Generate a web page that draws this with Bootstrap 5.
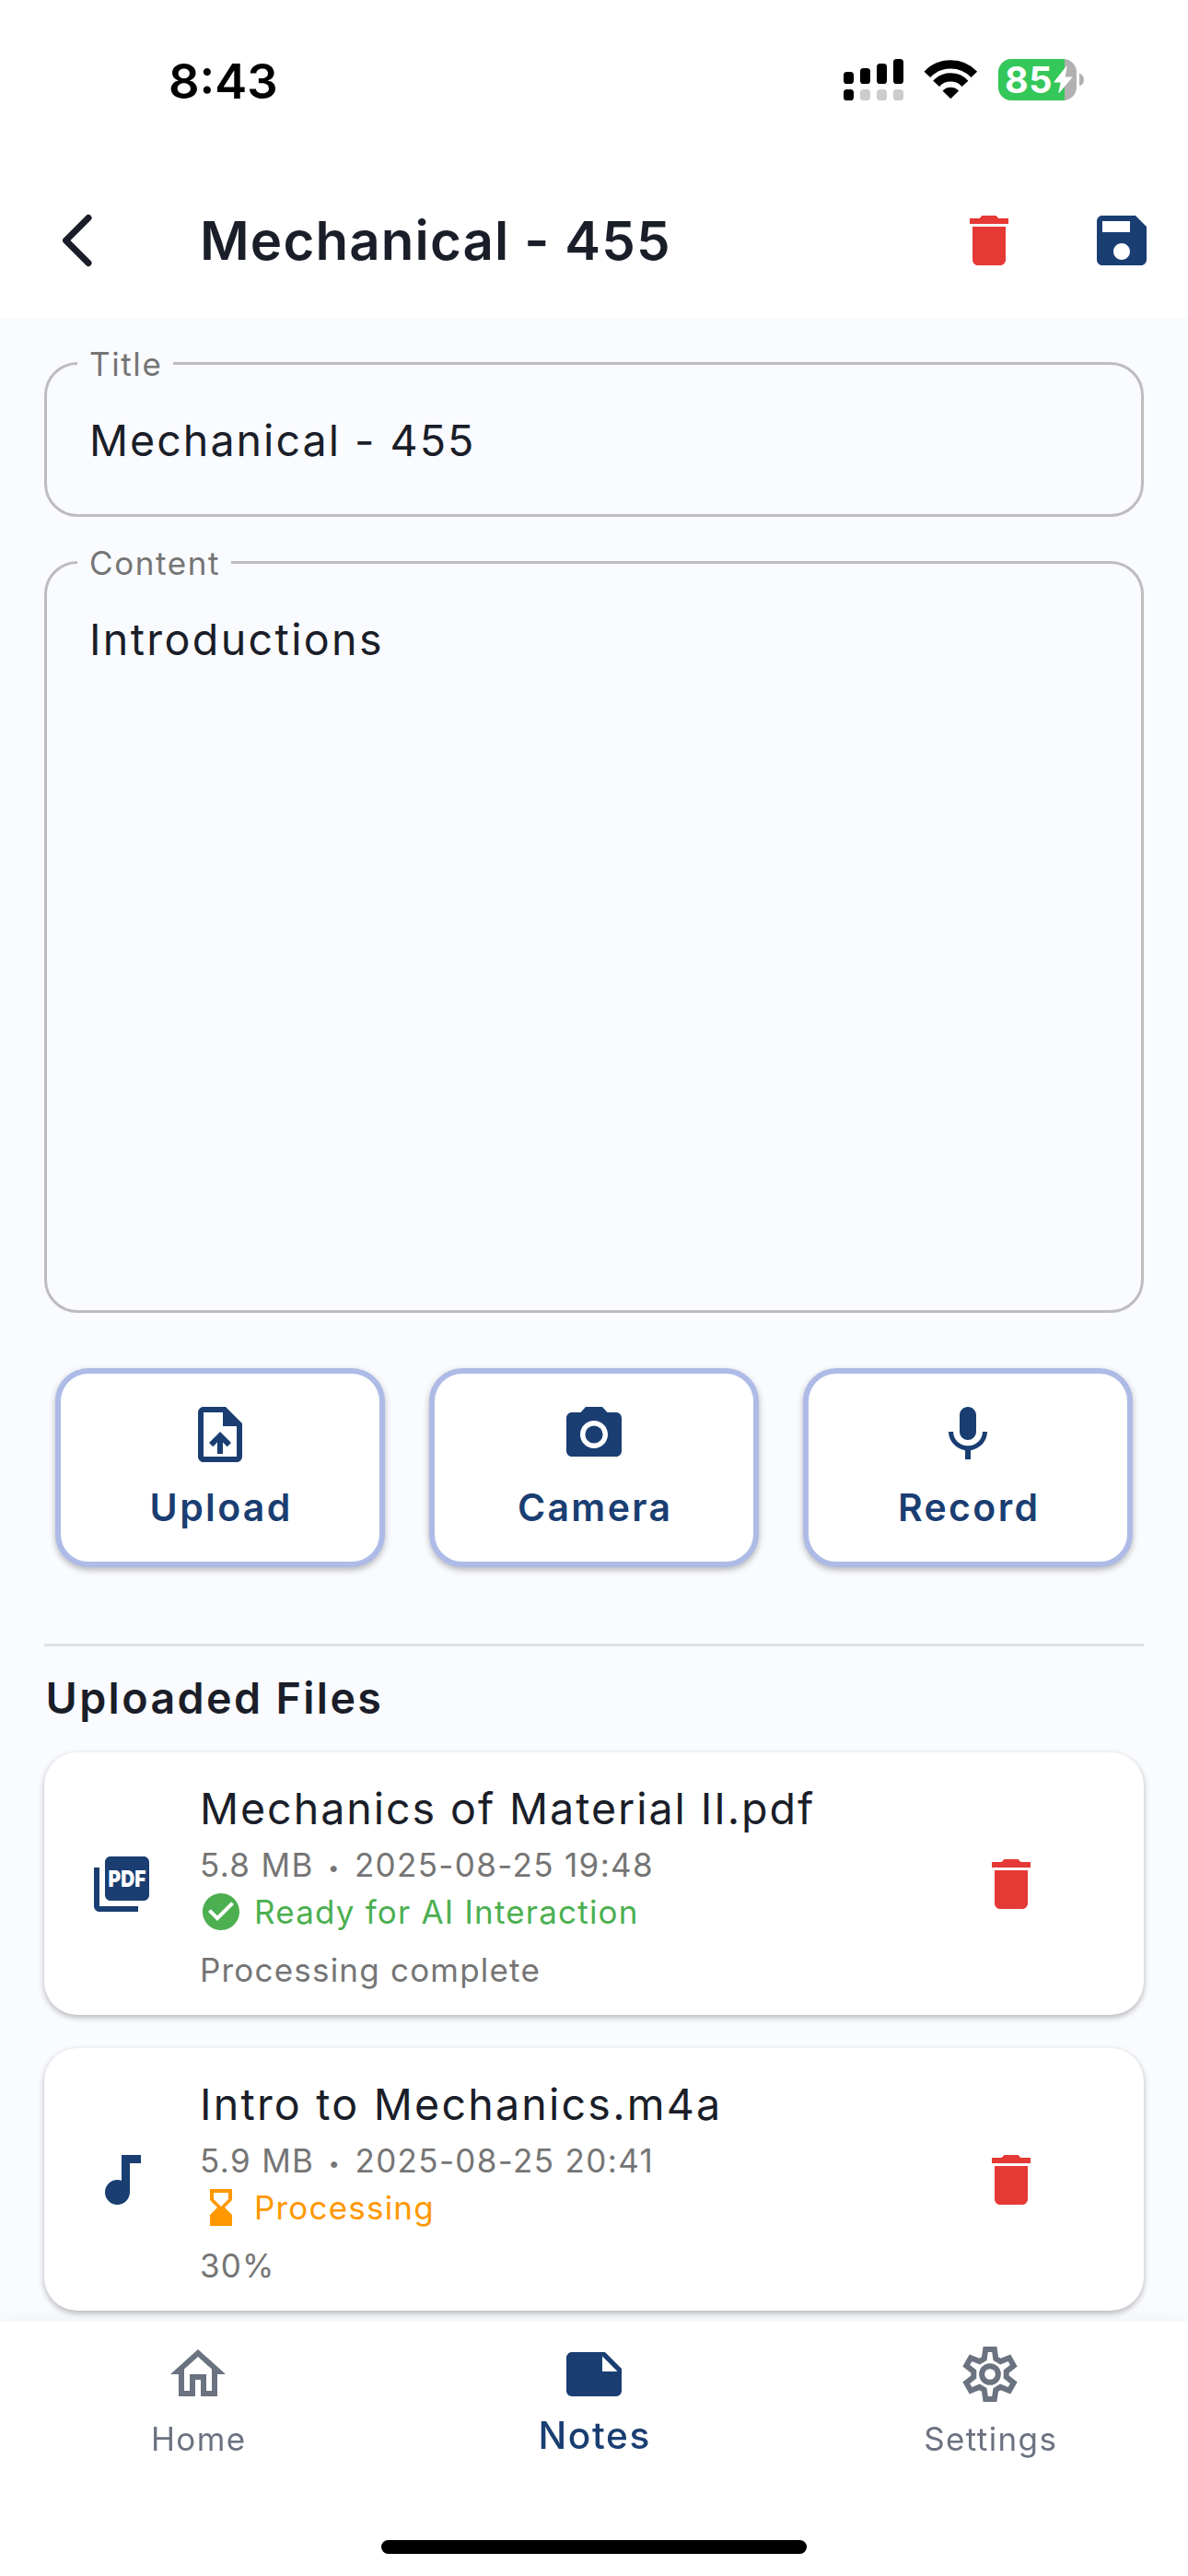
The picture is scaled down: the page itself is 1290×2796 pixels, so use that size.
<!DOCTYPE html>
<html lang="en">
<head>
<meta charset="utf-8">
<meta name="viewport" content="width=device-width, initial-scale=1">
<title>Mechanical - 455</title>
<link href="https://cdn.jsdelivr.net/npm/bootstrap@5.3.0/dist/css/bootstrap.min.css" rel="stylesheet">
<style>
  :root { --ink: #1a1e29; --navy: #1a3e72; --page: #fafbff; --muted: #757575; --danger: #e53935; }
  body { background: var(--page); color: var(--ink); font-family: Inter, "Liberation Sans", sans-serif; }
  .screen { width: 1290px; height: 2796px; }
  svg { display: block; flex: none; overflow: visible; }
  .ico { width: 72px; height: 72px; fill: currentColor; }
  .ico-sm { width: 48px; height: 48px; fill: currentColor; }
  .navy { color: var(--navy); }
  .red { color: var(--danger); }

  .status-bar { height: 173px; padding: 0 113px 0 183px; color: #000; }
  .clock { font-size: 52.5px; font-weight: 600; line-height: 60px; padding-top: 3px; }
  .wifi { margin: 0 18px 0 19px; }
  .app-bar { height: 172px; padding: 4px 36px 0 48px; gap: 72px; }
  .app-title { font-size: 58.2px; font-weight: 600; line-height: 72px; letter-spacing: 1.15px; margin: 0 0 0 25px; }

  .content { padding: 48px 48px 0; }
  .field { height: 168px; }
  .field-tall { height: 816px; margin-top: 48px; }
  .field .form-control { height: 100%; background: transparent; border: 3px solid #bdbdbd; border-radius: 36px;
    padding: 2px 45px 0 46px; font-size: 46.6px; line-height: 72px; color: var(--ink); letter-spacing: 2px; resize: none; }
  .field-tall .form-control { padding-top: 46px; letter-spacing: 2.36px; }
  .field-label { position: absolute; left: 36px; top: -20px; padding: 0 12px 0 13px; background: var(--page);
    font-size: 35px; line-height: 44px; color: var(--muted); letter-spacing: 1.6px; }

  .actions { margin: 60px 12px 0; gap: 48px; }
  .action { height: 216px; border: 6px solid #aebbe7; border-radius: 36px; background: #fff; padding: 30px 0 0;
    box-shadow: 0 3px 7px rgba(0,0,0,.28); color: var(--navy); font-size: 41px; font-weight: 600; line-height: 48px; letter-spacing: 2.35px; }
  .action span { margin: 19px -2.3px 0 0; }
  .rule { height: 3px; background: #e0e2e3; margin-top: 82.5px; }
  .section-title { font-size: 46.6px; font-weight: 600; line-height: 60px; letter-spacing: 2.38px; margin: 26.5px 0 29px 1.5px; }

  .file { height: 285px; border: 0; border-radius: 36px; background: #fff; padding: 0 108px 0 48px; margin-bottom: 36px;
    box-shadow: 0 3px 6px rgba(0,0,0,.24), 0 1px 10px rgba(0,0,0,.05); }
  .file-body { margin-left: 49px; padding-top: 31px; }
  .file-name { font-size: 46.6px; line-height: 60px; letter-spacing: 1.93px; color: var(--ink); }
  .file-name.wide { letter-spacing: 2.2px; }
  .file-meta { font-size: 35px; line-height: 54px; letter-spacing: 1.35px; color: var(--muted); margin-top: 4px; white-space: nowrap; }
  .dot { font-size: 22px; line-height: 1; vertical-align: 2px; margin: 0 4px; }
  .file-status { font-size: 35px; line-height: 48px; letter-spacing: 1.2px; gap: 12px; }
  .file-status svg { margin-left: -1px; }
  .file-note { font-size: 35px; line-height: 54px; letter-spacing: 1.2px; color: var(--muted); margin-top: 12px; }
  .ready { color: #4caf50; }
  .busy { color: #ff9800; }

  .tab-bar { height: 276px; background: #fff; box-shadow: 0 -3px 20px rgba(0,0,0,.04); z-index: 2; }
  .tab-item { padding-top: 21px; color: #6b7280; font-size: 35px; line-height: 48px; letter-spacing: 1.4px; }
  .tab-item span { margin: 10px -1.5px 0 0; }
  .tab-item.current { color: var(--navy); font-size: 40.6px; font-weight: 500; letter-spacing: 1.64px; }
  .tab-item.current span { margin-top: 7px; }
  .home-indicator { width: 462px; height: 15px; border-radius: 8px; background: #000; margin-bottom: 24px; }
</style>
</head>
<body>
<div class="screen d-flex flex-column overflow-hidden">
  <header class="bg-white">
    <div class="status-bar d-flex align-items-center justify-content-between">
      <span class="clock">8:43</span>
      <div class="d-flex align-items-center">
        <svg width="65" height="45" viewBox="0 0 65 45">
          <rect x="0" y="14" width="11" height="13" rx="3.6"/><rect x="18" y="10" width="11" height="17" rx="3.6"/>
          <rect x="36" y="5" width="11" height="22" rx="3.6"/><rect x="54" y="0" width="11" height="27" rx="3.6"/>
          <rect x="0" y="33" width="11" height="12" rx="3.6"/>
          <g fill="#ccc"><rect x="18" y="33" width="11" height="12" rx="3.6"/><rect x="36" y="33" width="11" height="12" rx="3.6"/><rect x="54" y="33" width="11" height="12" rx="3.6"/></g>
        </svg>
        <svg class="wifi" width="66" height="45" viewBox="0 4 66 45">
          <g fill="none" stroke="#000" stroke-width="9.2"><path d="M6.8 20.8A35.2 35.2 0 0 1 57.8 20.8"/><path d="M16.6 30.8A21.2 21.2 0 0 1 48 30.8"/></g>
          <path d="M32.3 46.3L24.3 38.6A11.6 11.6 0 0 1 40.3 38.6Z" stroke="#000" stroke-width="1.2" stroke-linejoin="round"/>
        </svg>
        <svg width="93" height="45" viewBox="0 0 93 45">
          <rect width="85" height="45" rx="14.5" fill="#b1b1b1"/>
          <path d="M14.5 0H72V45H14.5A14.5 14.5 0 0 1 0 30.5V14.5A14.5 14.5 0 0 1 14.5 0Z" fill="#34c759"/>
          <path d="M88 15.5Q93 17.5 93 22.5T88 29.5Z" fill="#b1b1b1"/>
          <text x="7" y="36.6" font-size="39.5" font-weight="700" letter-spacing=".6" fill="#fff">85</text>
          <path d="M74 8.500L61 25H68.500L66 36.200L79.500 20H72Z" fill="#fff" stroke="#fff" stroke-width="1.2" stroke-linejoin="round"/>
        </svg>
      </div>
    </div>
    <div class="app-bar d-flex align-items-center">
      <svg class="ico" viewBox="0 0 72 72"><path d="M48 11.500L23.500 36L48 60.500" fill="none" stroke="#1a1e29" stroke-width="7" stroke-linecap="round" stroke-linejoin="round"/></svg>
      <h1 class="app-title flex-grow-1">Mechanical - 455</h1>
      <svg class="ico red" viewBox="0 0 24 24"><path d="M6 19c0 1.100.9 2 2 2h8c1.100 0 2-.9 2-2V7H6v12zM19 4h-3.500l-1-1h-5l-1 1H5v2h14V4z"/></svg>
      <svg class="ico navy" viewBox="0 0 24 24"><path d="M17 3H5c-1.110 0-2 .9-2 2v14c0 1.100.89 2 2 2h14c1.100 0 2-.9 2-2V7l-4-4zm-5 16c-1.660 0-3-1.340-3-3s1.340-3 3-3 3 1.340 3 3-1.340 3-3 3zm3-10H5V5h10v4z"/></svg>
    </div>
  </header>

  <main class="content flex-grow-1">
    <div class="field position-relative">
      <input id="note-title" class="form-control" value="Mechanical - 455">
      <label for="note-title" class="field-label">Title</label>
    </div>
    <div class="field field-tall position-relative">
      <textarea id="note-content" class="form-control">Introductions</textarea>
      <label for="note-content" class="field-label">Content</label>
    </div>

    <div class="actions d-flex">
      <button class="action flex-fill w-100 d-flex flex-column align-items-center">
        <svg class="ico" viewBox="0 0 24 24"><path d="M14 2H6c-1.100 0-1.990.9-1.990 2L4 20c0 1.100.89 2 1.990 2H18c1.100 0 2-.9 2-2V8l-6-6zm4 18H6V4h7v5h5v11zM8 15.010l1.410 1.410L11 14.840V19h2v-4.160l1.590 1.590L16 15.010 12.010 11z"/></svg>
        <span>Upload</span>
      </button>
      <button class="action flex-fill w-100 d-flex flex-column align-items-center">
        <svg class="ico" viewBox="0 0 24 24"><circle cx="12" cy="12" r="3.200"/><path d="M9 2L7.170 4H4c-1.100 0-2 .9-2 2v12c0 1.100.9 2 2 2h16c1.100 0 2-.9 2-2V6c0-1.100-.9-2-2-2h-3.170L15 2H9zm3 15c-2.760 0-5-2.240-5-5s2.240-5 5-5 5 2.240 5 5-2.240 5-5 5z"/></svg>
        <span>Camera</span>
      </button>
      <button class="action flex-fill w-100 d-flex flex-column align-items-center">
        <svg class="ico" viewBox="0 0 24 24"><path d="M12 14c1.660 0 2.990-1.340 2.990-3L15 5c0-1.660-1.340-3-3-3S9 3.340 9 5v6c0 1.660 1.340 3 3 3zm5.300-3c0 3-2.540 5.100-5.300 5.100S6.700 14 6.700 11H5c0 3.410 2.720 6.230 6 6.720V21h2v-3.280c3.280-.48 6-3.300 6-6.720h-1.700z"/></svg>
        <span>Record</span>
      </button>
    </div>

    <div class="rule"></div>
    <h2 class="section-title">Uploaded Files</h2>

    <article class="card file flex-row align-items-center">
      <svg class="ico navy" viewBox="0 0 24 24"><path d="M20 2H8c-1.100 0-2 .9-2 2v12c0 1.100.9 2 2 2h12c1.100 0 2-.9 2-2V4c0-1.100-.9-2-2-2zM4 6H2v14c0 1.100.9 2 2 2h14v-2H4V6z"/><text x="7.200" y="13" font-size="8.250" font-weight="900" fill="#fff" textLength="13.600" lengthAdjust="spacingAndGlyphs">PDF</text></svg>
      <div class="file-body flex-grow-1 align-self-start">
        <div class="file-name">Mechanics of Material II.pdf</div>
        <div class="file-meta">5.8 MB <span class="dot">•</span> 2025-08-25 19:48</div>
        <div class="file-status ready d-flex align-items-center">
          <svg class="ico-sm" viewBox="0 0 24 24"><path d="M12 2C6.480 2 2 6.480 2 12s4.480 10 10 10 10-4.480 10-10S17.520 2 12 2zm-2 15l-5-5 1.410-1.410L10 14.170l7.590-7.590L19 8l-9 9z"/></svg>
          <span>Ready for AI Interaction</span>
        </div>
        <div class="file-note">Processing complete</div>
      </div>
      <svg class="ico red" viewBox="0 0 24 24"><path d="M6 19c0 1.100.9 2 2 2h8c1.100 0 2-.9 2-2V7H6v12zM19 4h-3.500l-1-1h-5l-1 1H5v2h14V4z"/></svg>
    </article>

    <article class="card file flex-row align-items-center">
      <svg class="ico navy" viewBox="0 0 24 24"><path d="M12 3v9.280c-.47-.17-.97-.28-1.500-.28C8.010 12 6 14.010 6 16.500S8.010 21 10.500 21c2.310 0 4.200-1.750 4.450-4H15V6h4V3h-7z"/></svg>
      <div class="file-body flex-grow-1 align-self-start">
        <div class="file-name wide">Intro to Mechanics.m4a</div>
        <div class="file-meta">5.9 MB <span class="dot">•</span> 2025-08-25 20:41</div>
        <div class="file-status busy d-flex align-items-center">
          <svg class="ico-sm" viewBox="0 0 24 24"><path d="M18 22l-.01-6L14 12l3.990-4.010L18 2H6v6l4 4-4 3.990V22h12zM8 7.500V4h8v3.500l-4 4-4-4z"/></svg>
          <span>Processing</span>
        </div>
        <div class="file-note">30%</div>
      </div>
      <svg class="ico red" viewBox="0 0 24 24"><path d="M6 19c0 1.100.9 2 2 2h8c1.100 0 2-.9 2-2V7H6v12zM19 4h-3.500l-1-1h-5l-1 1H5v2h14V4z"/></svg>
    </article>
  </main>

  <nav class="tab-bar fixed-bottom d-flex flex-column align-items-center justify-content-between">
    <div class="d-flex w-100">
      <div class="tab-item col-4 d-flex flex-column align-items-center">
        <svg class="ico" viewBox="0 0 24 24"><path d="M12 5.690l5 4.500V18h-2v-6H9v6H7v-7.810l5-4.500M12 3L2 12h3v8h6v-6h2v6h6v-8h3L12 3z"/></svg>
        <span>Home</span>
      </div>
      <div class="tab-item current col-4 d-flex flex-column align-items-center">
        <svg class="ico" viewBox="0 0 24 24"><path d="M22 10l-6-6H4c-1.100 0-2 .9-2 2v12.010c0 1.100.9 1.990 2 1.990l16-.01c1.100 0 2-.89 2-1.990v-8zm-7-4.500l5.500 5.500H15V5.500z"/></svg>
        <span>Notes</span>
      </div>
      <div class="tab-item col-4 d-flex flex-column align-items-center">
        <svg class="ico" viewBox="-12 -12 24 24"><g fill="none" stroke="currentColor" stroke-width="2"><path d="M-2.100-5.600L-1.600-9H1.600L2.100-5.600L3.800-4.620L6.990-5.890L8.590-3.110L5.900-.98V.98L8.590 3.110L6.990 5.890L3.800 4.620L2.100 5.600L1.600 9H-1.600L-2.100 5.600L-3.800 4.620L-6.990 5.890L-8.590 3.110L-5.900.98V-.98L-8.590-3.110L-6.990-5.890L-3.800-4.620Z"/><circle r="2.950"/></g></svg>
        <span>Settings</span>
      </div>
    </div>
    <div class="home-indicator"></div>
  </nav>
</div>
<script src="https://cdn.jsdelivr.net/npm/bootstrap@5.3.0/dist/js/bootstrap.bundle.min.js"></script>
</body>
</html>
